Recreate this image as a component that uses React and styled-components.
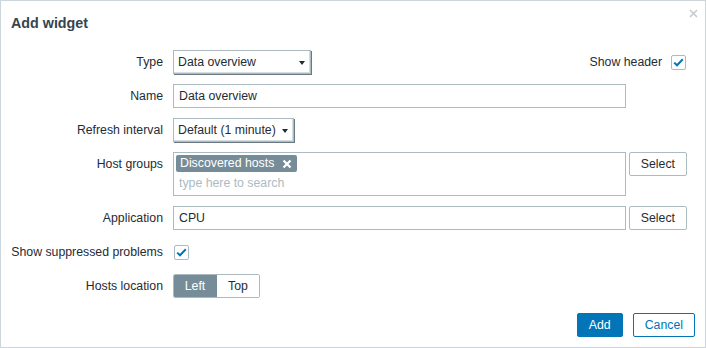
import styled, { createGlobalStyle } from 'styled-components';

const GlobalStyle = createGlobalStyle`
  html, body {
    margin: 0;
    padding: 0;
    background: #ffffff;
  }
  body {
    font-family: "Liberation Sans", Arial, sans-serif;
    font-size: 12.3px;
    color: #1f2c33;
  }
  * { box-sizing: border-box; }
`;

const Dialog = styled.div`
  position: relative;
  width: 706px;
  height: 348px;
  border: 1px solid #ccd5d9;
  background: #fff;
  display: flex;
  flex-direction: column;
`;

const Header = styled.div`
  height: 48px;
  padding: 14px 10px 0;
`;

const Title = styled.h4`
  margin: 0;
  font-size: 14.3px;
  font-weight: bold;
  color: #34454f;
  line-height: 16px;
`;

const Close = styled.button`
  position: absolute;
  top: 5px;
  right: 5px;
  width: 14px;
  height: 14px;
  padding: 0;
  border: 0;
  background: transparent;
  display: flex;
  align-items: center;
  justify-content: center;
`;

const Form = styled.div`
  display: grid;
  grid-template-columns: 152px 514px;
  column-gap: 10px;
  row-gap: 10px;
  padding: 1px 0 0 10px;
  align-items: start;
`;

const Label = styled.div`
  text-align: right;
  line-height: 24px;
  height: 24px;
  white-space: nowrap;
`;

const Field = styled.div`
  display: flex;
  align-items: ${p => (p.$top ? 'flex-start' : 'center')};
  justify-content: ${p => (p.$spread ? 'space-between' : 'flex-start')};
  min-height: 24px;
  gap: 3px;
`;

const Select = styled.div`
  position: relative;
  width: ${p => p.$w}px;
  height: 24px;
  border: 1px solid #acbbc2;
  background: #fff;
  padding: 0 4px;
  line-height: 22px;
  box-shadow: inset -2px -2px 0 -1px #d6dde1, 1px 1px 0 0 #6b7a82;
  &::after {
    content: '';
    position: absolute;
    right: 5px;
    top: 10px;
    border-left: 3px solid transparent;
    border-right: 3px solid transparent;
    border-top: 4px solid #1f2c33;
  }
`;

const Input = styled.div`
  width: ${p => p.$w || 453}px;
  height: 24px;
  border: 1px solid #acbbc2;
  padding: 0 5px;
  line-height: 22px;
  background: #fff;
`;

const MultiSelect = styled.div`
  width: 453px;
  height: 44px;
  border: 1px solid #acbbc2;
  padding: 2px 2px 0;
  background: #fff;
`;

const Tag = styled.span`
  display: inline-flex;
  align-items: center;
  gap: 8px;
  height: 17px;
  padding: 0 5px 0 4px;
  background: #768d99;
  color: #fff;
  border-radius: 2px;
  line-height: 17px;
`;

const Placeholder = styled.div`
  color: #acbbc2;
  padding-left: 3px;
  line-height: 23px;
`;

const Button = styled.button`
  height: 24px;
  padding: 0 ${p => p.$pad || 11}px;
  font-family: inherit;
  font-size: inherit;
  border-radius: 2px;
  cursor: pointer;
  border: 1px solid ${p => (p.$primary || p.$outline ? '#0275b8' : '#acbbc2')};
  background: ${p => (p.$primary ? '#0275b8' : '#fff')};
  color: ${p => (p.$primary ? '#fff' : p.$outline ? '#0275b8' : '#1f2c33')};
`;

const CheckLabel = styled.label`
  display: flex;
  align-items: center;
  gap: 8px;
  margin-right: 1px;
`;

const Box = styled.span`
  width: 15px;
  height: 15px;
  border: 1px solid #acbbc2;
  border-radius: 2px;
  background: #fff;
  display: inline-flex;
  align-items: center;
  justify-content: center;
  margin-left: 1px;
`;

const Segmented = styled.div`
  display: flex;
  height: 24px;
  border: 1px solid #acbbc2;
  border-radius: 2px;
  overflow: hidden;
`;

const Segment = styled.div`
  width: ${p => p.$w}px;
  text-align: center;
  line-height: 22px;
  background: ${p => (p.$active ? '#768d99' : '#fff')};
  color: ${p => (p.$active ? '#fff' : '#1f2c33')};
  border-right: ${p => (p.$active ? '1px solid #768d99' : '0')};
`;

const Footer = styled.div`
  margin-top: auto;
  display: flex;
  justify-content: flex-end;
  gap: 10px;
  padding: 0 10px 10px 0;
`;

function Check() {
  return (
    <Box>
      <svg width="11" height="9" viewBox="0 0 11 9">
        <path d="M1.2 4.6 L4 7.3 L9.8 1.3" fill="none" stroke="#0275b8" strokeWidth="2" />
      </svg>
    </Box>
  );
}

function App() {
  return (
    <>
      <GlobalStyle />
      <Dialog>
        <Header>
          <Title>Add widget</Title>
          <Close aria-label="Close">
            <svg width="9" height="9" viewBox="0 0 9 9">
              <path d="M1 1 L8 8 M8 1 L1 8" stroke="#c2cbd0" strokeWidth="1.6" />
            </svg>
          </Close>
        </Header>

        <Form>
          <Label>Type</Label>
          <Field $spread>
            <Select $w={138}>Data overview</Select>
            <CheckLabel>
              Show header
              <Check />
            </CheckLabel>
          </Field>

          <Label>Name</Label>
          <Field>
            <Input>Data overview</Input>
          </Field>

          <Label>Refresh interval</Label>
          <Field>
            <Select $w={121}>Default (1 minute)</Select>
          </Field>

          <Label>Host groups</Label>
          <Field $top>
            <MultiSelect>
              <Tag>
                Discovered hosts
                <svg width="10" height="10" viewBox="0 0 10 10">
                  <path d="M1.5 1.5 L8.5 8.5 M8.5 1.5 L1.5 8.5" stroke="#fff" strokeWidth="2.2" />
                </svg>
              </Tag>
              <Placeholder>type here to search</Placeholder>
            </MultiSelect>
            <Button>Select</Button>
          </Field>

          <Label>Application</Label>
          <Field>
            <Input>CPU</Input>
            <Button>Select</Button>
          </Field>

          <Label>Show suppressed problems</Label>
          <Field>
            <Check />
          </Field>

          <Label>Hosts location</Label>
          <Field>
            <Segmented>
              <Segment $w={43} $active>Left</Segment>
              <Segment $w={42}>Top</Segment>
            </Segmented>
          </Field>
        </Form>

        <Footer>
          <Button $primary>Add</Button>
          <Button $outline>Cancel</Button>
        </Footer>
      </Dialog>
    </>
  );
}

export default App;
